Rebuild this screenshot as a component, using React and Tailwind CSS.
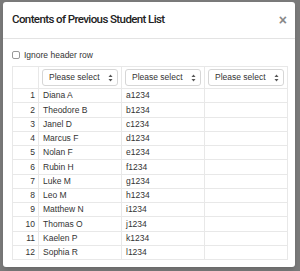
const students = [
  ['Diana A', 'a1234'],
  ['Theodore B', 'b1234'],
  ['Janel D', 'c1234'],
  ['Marcus F', 'd1234'],
  ['Nolan F', 'e1234'],
  ['Rubin H', 'f1234'],
  ['Luke M', 'g1234'],
  ['Leo M', 'h1234'],
  ['Matthew N', 'i1234'],
  ['Thomas O', 'j1234'],
  ['Kaelen P', 'k1234'],
  ['Sophia R', 'l1234'],
];

function SelectBox() {
  return (
    <div className="h-[17px] rounded-[3px] border border-[#d6d6d6] bg-white flex items-center justify-between pl-[6px] pr-[4px] text-[8.5px] text-[#333]">
      <span>Please select</span>
      <svg width="5" height="8" viewBox="0 0 5 8" className="text-[#555]">
        <path d="M2.5 0.5 L4.5 3 L0.5 3 Z" fill="currentColor" />
        <path d="M2.5 7.5 L4.5 5 L0.5 5 Z" fill="currentColor" />
      </svg>
    </div>
  );
}

function App() {
  return (
    <div className="w-[300px] h-[271px] bg-[#7a7a7a] pt-[2px] pl-[3px] overflow-hidden font-['Liberation_Sans',Arial,sans-serif]">
      <div className="w-[292px] h-[265px] bg-white rounded-[3px] shadow-md">
        {/* Header */}
        <div className="h-[37px] border-b border-[#e3e3e3] flex items-center justify-between pl-[9px] pr-[8px]">
          <h1 className="font-['Roboto',sans-serif] font-medium text-[11.5px] tracking-[-0.6px] text-[#222]">
            Contents of Previous Student List
          </h1>
          <span className="text-[14px] font-bold text-[#888] leading-none">×</span>
        </div>

        {/* Body */}
        <div className="px-[9px] pt-[10px]">
          <label className="flex items-center gap-[4px] h-[12px] text-[8.5px] text-[#333]">
            <span className="w-[8px] h-[8px] rounded-[2px] border border-[#999] bg-white" />
            Ignore header row
          </label>

          <table className="mt-[5px] border-collapse text-[8.5px] text-[#333] table-fixed w-[275px]">
            <colgroup>
              <col className="w-[26px]" />
              <col className="w-[83px]" />
              <col className="w-[83px]" />
              <col className="w-[83px]" />
            </colgroup>
            <thead>
              <tr className="h-[22px]">
                <th className="border border-[#e8e8e8]" />
                {[0, 1, 2].map((i) => (
                  <th key={i} className="border border-[#e8e8e8] px-[3px] font-normal">
                    <SelectBox />
                  </th>
                ))}
              </tr>
            </thead>
            <tbody>
              {students.map(([name, id], i) => (
                <tr key={id} className="h-[14.25px]">
                  <td className="border border-[#e8e8e8] text-right pr-[3px] leading-none">{i + 1}</td>
                  <td className="border border-[#e8e8e8] pl-[4px] leading-none">{name}</td>
                  <td className="border border-[#e8e8e8] pl-[4px] leading-none">{id}</td>
                  <td className="border border-[#e8e8e8]" />
                </tr>
              ))}
            </tbody>
          </table>
        </div>
      </div>
    </div>
  );
}

export default App;
